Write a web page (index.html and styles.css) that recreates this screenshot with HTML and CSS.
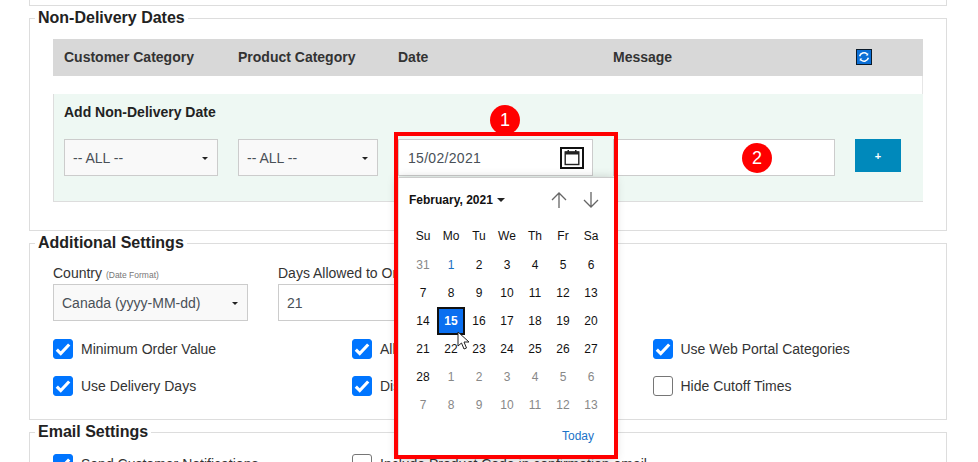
FILE: index.html
```html
<!DOCTYPE html>
<html lang="en">
<head>
<meta charset="utf-8">
<title>Settings</title>
<link rel="stylesheet" href="styles.css">
</head>
<body>
<main class="page">
  <div class="panel-stub"></div>

  <fieldset class="panel panel-dates">
    <legend>Non-Delivery Dates</legend>
    <div class="dates-table">
      <div class="thead">
        <span>Customer Category</span>
        <span>Product Category</span>
        <span>Date</span>
        <span>Message</span>
        <svg class="refresh" viewBox="0 0 16 16" width="16" height="16" aria-hidden="true">
          <rect x="0.5" y="0.5" width="15" height="15" fill="#0b6fd6" stroke="#0a1a2a"/>
          <path d="M3.6 7.2A4.5 4.5 0 0 1 11 5" fill="none" stroke="#fff" stroke-width="1.5"/>
          <path d="M12.4 8.8A4.5 4.5 0 0 1 5 11" fill="none" stroke="#fff" stroke-width="1.5"/>
          <path d="M12.2 3.8V6.6H9.6Z M3.8 12.2V9.4H6.4Z" fill="#fff"/>
        </svg>
      </div>
      <div class="tspacer"></div>
      <div class="add-row">
        <div class="add-title">Add Non-Delivery Date</div>
        <div class="add-fields">
          <div class="select w-cust">-- ALL --<i class="caret"></i></div>
          <div class="select w-prod">-- ALL --<i class="caret"></i></div>
          <div class="input w-date"><span class="date-value">15/02/2021</span>
            <svg class="cal" viewBox="0 0 24 22" width="24" height="22" aria-hidden="true">
              <rect x="1" y="1" width="22" height="20" fill="#fff" stroke="#111" stroke-width="2"/>
              <rect x="5.2" y="5" width="13.600" height="12.500" fill="none" stroke="#222" stroke-width="1.400"/>
              <rect x="5" y="4.500" width="14" height="3" fill="#222"/>
              <rect x="7.500" y="3" width="1.500" height="3" fill="#222"/>
              <rect x="15" y="3" width="1.500" height="3" fill="#222"/>
            </svg>
          </div>
          <div class="input input-plain w-msg"></div>
          <button class="add-btn" type="button">+</button>
        </div>
      </div>
    </div>
  </fieldset>

  <fieldset class="panel panel-additional">
    <legend>Additional Settings</legend>
    <div class="field-row">
      <div class="field w-country">
        <label class="label">Country <small>(Date Format)</small></label>
        <div class="select">Canada (yyyy-MM-dd)<i class="caret"></i></div>
      </div>
      <div class="field w-days">
        <label class="label">Days Allowed to Order</label>
        <div class="input input-plain">21</div>
      </div>
    </div>
    <div class="checks">
      <div class="check"><i class="box on"></i>Minimum Order Value</div>
      <div class="check"><i class="box on"></i>Allow Substitutions</div>
      <div class="check"><i class="box on"></i>Use Web Portal Categories</div>
      <div class="check"><i class="box on"></i>Use Delivery Days</div>
      <div class="check"><i class="box on"></i>Display Prices</div>
      <div class="check"><i class="box"></i>Hide Cutoff Times</div>
    </div>
  </fieldset>

  <fieldset class="panel panel-email">
    <legend>Email Settings</legend>
    <div class="checks">
      <div class="check"><i class="box on"></i>Send Customer Notifications</div>
      <div class="check"><i class="box"></i>Include Product Code in confirmation email</div>
    </div>
  </fieldset>
</main>

<div class="badge badge-1">1</div>

<div class="popup">
  <div class="pop-head">
    <span class="pop-month">February, 2021<i class="caret caret-dark"></i></span>
    <span class="pop-nav">
      <svg viewBox="0 0 18 18" width="18" height="18" aria-hidden="true"><path d="M9 17V2M2 9l7-7 7 7" fill="none" stroke="#666" stroke-width="1.300"/></svg>
      <svg viewBox="0 0 18 18" width="18" height="18" aria-hidden="true"><path d="M9 1v15M2 9l7 7 7-7" fill="none" stroke="#666" stroke-width="1.300"/></svg>
    </span>
  </div>
  <div class="cal-grid">
    <b>Su</b><b>Mo</b><b>Tu</b><b>We</b><b>Th</b><b>Fr</b><b>Sa</b>
    <span class="off">31</span><span class="day-b">1</span><span>2</span><span>3</span><span>4</span><span>5</span><span>6</span>
    <span>7</span><span>8</span><span>9</span><span>10</span><span>11</span><span>12</span><span>13</span>
    <span>14</span><span class="sel">15</span><span>16</span><span>17</span><span>18</span><span>19</span><span>20</span>
    <span>21</span><span>22</span><span>23</span><span>24</span><span>25</span><span>26</span><span>27</span>
    <span>28</span><span class="off">1</span><span class="off">2</span><span class="off">3</span><span class="off">4</span><span class="off">5</span><span class="off">6</span>
    <span class="off">7</span><span class="off">8</span><span class="off">9</span><span class="off">10</span><span class="off">11</span><span class="off">12</span><span class="off">13</span>
  </div>
  <div class="pop-foot">Today</div>
</div>

<div class="red-box"></div>
<div class="badge badge-2">2</div>

<svg class="cursor" viewBox="0 0 14 20" width="14" height="20" aria-hidden="true">
  <path d="M1 1V15L4.500 12L7 18L9.500 17L7 11H12Z" fill="#fff" stroke="#222" stroke-width="1"/>
</svg>
</body>
</html>
```
FILE: styles.css
```css
* { box-sizing: border-box; }
html, body { margin: 0; height: 462px; overflow: hidden; background: #fff; }
body { font-family: "Liberation Sans", Arial, sans-serif; font-size: 14px; color: #212529; position: relative; }

.page { width: 918px; margin-left: 29px; }
.panel-stub { height: 6px; border: 1px solid #ddd; border-top: 0; }

.panel { margin: 0; min-width: 0; border: 1px solid #ddd; background: #fff; }
.panel legend { padding: 0 3px; margin-left: -18px; font-size: 16px; font-weight: 700; line-height: 18px; color: #222; }
.panel-dates { margin-top: 3px; height: 222px; padding: 12px 23px 0; }
.panel-additional { margin-top: 3px; height: 186px; padding: 11px 23px 0; }
.panel-email { margin-top: 3px; height: 60px; padding: 13px 23px 0; }

.thead { display: grid; grid-template-columns: 174px 160px 215px 243px 16px; align-items: center; height: 37px; padding: 0 0 2px 11px; background: #d8d8d8; font-weight: 700; font-size: 14px; color: #333; }
.refresh { display: block; }
.tspacer { height: 18px; border-right: 1px solid #e6e6e6; }
.add-row { height: 108px; background: #eef8f3; border-left: 1px solid #ddd; border-bottom: 1px solid #ddd; padding: 0 0 0 10px; }
.add-title { height: 45px; padding-top: 10px; line-height: 16px; font-weight: 700; font-size: 14px; color: #222; }
.add-fields { display: flex; gap: 20px; align-items: flex-start; }

.select, .input { height: 37px; display: flex; align-items: center; padding: 0 8px; border: 1px solid #ccc; background: #f9f9f9; color: #495057; position: relative; font-size: 14px; }
.input-plain { background: #fff; }
.w-cust { width: 154px; }
.w-prod { width: 140px; }
.w-date { width: 195px; justify-content: space-between; background: #fff; padding-left: 9px; }
.date-value { letter-spacing: .3px; }
.w-msg { width: 222px; }
.caret { position: absolute; right: 9px; top: 17px; width: 0; height: 0; border-left: 3.500px solid transparent; border-right: 3.500px solid transparent; border-top: 3.500px solid #222; }
.cal { display: block; }
.add-btn { width: 46px; height: 33px; border: 0; padding: 0; background: #0089bb; color: #fff; font: 700 11px "Liberation Sans", Arial, sans-serif; }

.field-row { display: flex; gap: 30px; }
.w-country { width: 195px; }
.w-days { width: 195px; }
.label { display: block; height: 21px; line-height: 20px; white-space: nowrap; color: #333; }
.label small { font-size: 8.500px; color: #777; }

.checks { display: grid; grid-template-columns: 299px 300.500px 1fr; row-gap: 17px; margin-top: 17px; }
.field-row + .checks { margin-top: 18px; }
.check { display: flex; align-items: center; height: 20px; gap: 8px; white-space: nowrap; color: #333; }
.box { width: 20px; height: 20px; flex: none; border: 1px solid #767676; border-radius: 3px; background: #fff; }
.box.on { border-color: #0075ff; background: #0075ff center / 18px 18px no-repeat url("data:image/svg+xml,%3Csvg xmlns='http://www.w3.org/2000/svg' viewBox='0 0 16 16'%3E%3Cpath d='M2.500 8.500l3.500 3.500 7.500-8' fill='none' stroke='%23fff' stroke-width='2.800'/%3E%3C/svg%3E"); }

.panel-email .checks { margin-top: 0; }

.popup { position: absolute; left: 398px; top: 177px; width: 216px; height: 280px; background: #fff; box-shadow: 0 2px 10px rgba(0,0,0,.25); border-top: 1px solid #ccc; border-left: 1px solid #ddd; color: #111; font-size: 12px; }
.pop-head { display: flex; justify-content: space-between; align-items: center; height: 44px; padding: 0 14px 0 10px; }
.pop-month { font-weight: 700; font-size: 12px; display: flex; align-items: center; }
.caret-dark { position: static; margin-left: 4px; border-left-width: 4px; border-right-width: 4px; border-top-width: 4px; }
.pop-nav { display: flex; gap: 14px; }
.pop-nav svg { display: block; }
.cal-grid { display: grid; grid-template-columns: repeat(7, 28px); grid-template-rows: 29px repeat(6, 28px); margin: 0 0 0 10px; text-align: center; }
.cal-grid b { font-weight: 400; display: flex; align-items: center; justify-content: center; padding-bottom: 2px; }
.cal-grid span { display: flex; align-items: center; justify-content: center; }
.cal-grid .off { color: #888; }
.cal-grid .day-b { color: #1c6fc0; }
.cal-grid .sel { background: #0a6ff0; color: #fff; font-weight: 700; border: 2px solid #111; }
.pop-foot { margin-top: 10px; padding-right: 20px; text-align: right; color: #1a73c8; font-size: 12px; }

.red-box { position: absolute; left: 394px; top: 132px; width: 224px; height: 327px; border: 4.500px solid #f00; pointer-events: none; }
.badge { position: absolute; width: 30px; height: 30px; border-radius: 50%; background: #f00; color: #fff; display: flex; align-items: center; justify-content: center; font-size: 18px; }
.badge-1 { left: 490px; top: 105px; }
.badge-2 { left: 742px; top: 143px; }
.cursor { position: absolute; left: 457px; top: 331px; display: block; }
```
